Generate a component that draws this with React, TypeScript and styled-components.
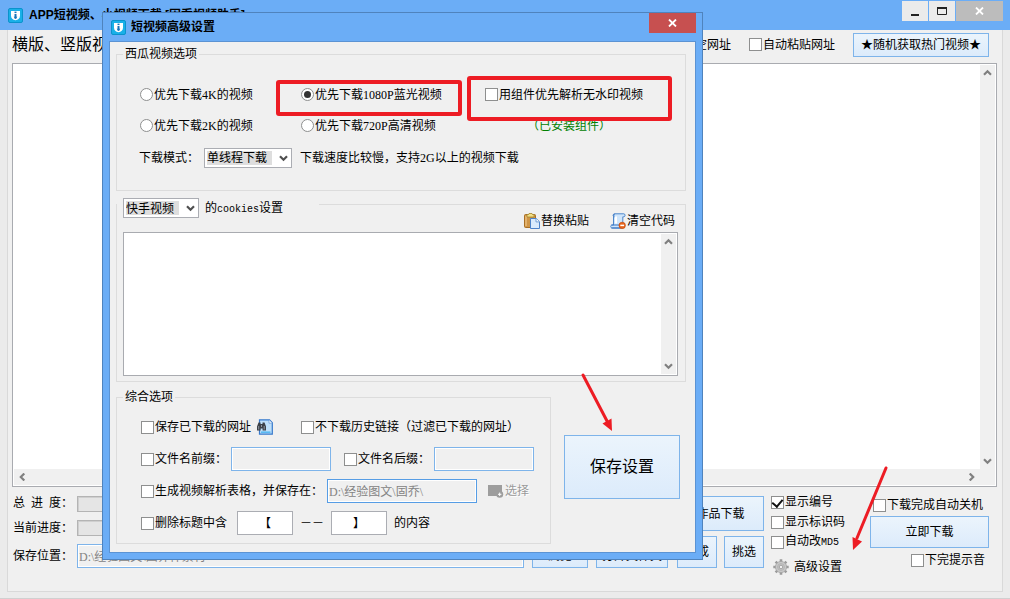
import React from 'react';
import styled, { createGlobalStyle, css } from 'styled-components';

const GlobalStyle = createGlobalStyle`
  * { box-sizing: border-box; }
  body {
    margin: 0;
    background: #ebebeb;
    color: #000;
    font: 12px/14px "Liberation Serif", "Noto Sans CJK SC", sans-serif;
  }
  button, input, select, textarea { font: inherit; color: inherit; margin: 0; }
`;

/* ---------- shared controls ---------- */

const Mono = styled.span`
  font-family: "Liberation Mono", monospace;
  font-size: 10px;
`;

const PushButton = styled.button<{ $w?: number; $h?: number; $size?: number }>`
  ${(p) => (p.$w ? `width: ${p.$w}px;` : '')}
  height: ${(p) => p.$h ?? 24}px;
  padding: 0;
  border: 1px solid #7eb4ea;
  background: linear-gradient(#ebf4fc, #dcebfb);
  font-size: ${(p) => p.$size ?? 12}px;
  white-space: nowrap;
`;

const IconButton = styled.button`
  display: flex;
  align-items: center;
  gap: 1px;
  padding: 0;
  border: 0;
  background: none;
  white-space: nowrap;
  &:disabled { color: #9a9a9a; text-shadow: 1px 1px #fff; }
`;

const Option = styled.label`
  display: inline-flex;
  align-items: center;
  gap: 1px;
  white-space: nowrap;
`;

const boxStyle = css`
  appearance: none;
  flex: none;
  width: 13px;
  height: 13px;
  border: 1px solid #8e8f8f;
  background: #fff;
`;

const Tick = styled.input.attrs({ type: 'checkbox' })`
  ${boxStyle}
  display: grid;
  place-items: center;
  &:checked::after {
    content: "";
    width: 5px;
    height: 8px;
    margin-bottom: 2px;
    border: solid #111;
    border-width: 0 2px 2px 0;
    transform: rotate(40deg);
  }
`;

const Dot = styled.input.attrs({ type: 'radio' })`
  ${boxStyle}
  border-radius: 50%;
  display: grid;
  place-items: center;
  &:checked::after {
    content: "";
    width: 7px;
    height: 7px;
    border-radius: 50%;
    background: #333;
  }
`;

const TextField = styled.input.attrs({ type: 'text' })<{
  $w?: number;
  $tone?: 'blue' | 'focus' | 'grey';
}>`
  ${(p) => (p.$w ? `width: ${p.$w}px;` : 'flex: 1; min-width: 0;')}
  height: 24px;
  padding: 0 1px;
  border: 1px solid ${(p) => (p.$tone === 'grey' ? '#abadb3' : p.$tone === 'focus' ? '#569de5' : '#7eb4ea')};
  background: ${(p) => (p.$tone === 'grey' ? '#fff' : '#f0f0f0')};
  box-shadow: inset 0 0 0 1px #fff;
  color: ${(p) => (p.$tone === 'grey' ? '#000' : '#838383')};
  text-align: ${(p) => (p.$tone === 'grey' ? 'center' : 'left')};
  border-radius: 0;
  outline: 0;
`;

const Field = styled.label<{ $w: number }>`
  display: inline-flex;
  align-items: center;
  flex: none;
  width: ${(p) => p.$w}px;
  gap: 1px;
  white-space: nowrap;
`;

const SelectWrap = styled.span<{ $w: number }>`
  position: relative;
  display: inline-block;
  flex: none;
  width: ${(p) => p.$w}px;
  height: 20px;
  svg { position: absolute; right: 4px; top: 6px; pointer-events: none; }
`;

const SelectBox = styled.select`
  appearance: none;
  display: block;
  width: 100%;
  height: 100%;
  padding: 0 2px;
  border: 1px solid #abadb3;
  border-radius: 0;
  background: linear-gradient(#dedede, #dedede) 2px 2px / calc(100% - 21px) 14px no-repeat #fff;
`;

const Chevron = ({ turn = 0, color = '#808080' }: { turn?: number; color?: string }) => (
  <svg width="9" height="8" viewBox="0 0 9 8">
    <path
      d="M1 2.2 4.5 5.7 8 2.2"
      fill="none"
      stroke={color}
      strokeWidth="2.2"
      transform={`rotate(${turn} 4.5 4)`}
    />
  </svg>
);

function DropDown({ width, label, value }: { width: number; label: string; value: string }) {
  return (
    <SelectWrap $w={width}>
      <SelectBox aria-label={label}>
        <option>{value}</option>
      </SelectBox>
      <Chevron color="#505050" />
    </SelectWrap>
  );
}

/* ---------- text panes with scroll bars ---------- */

const Pane = styled.div<{ $fixed?: number }>`
  display: grid;
  grid-template-columns: 1fr 15px;
  grid-template-rows: 1fr auto;
  ${(p) => (p.$fixed ? `height: ${p.$fixed}px;` : 'flex: 1;')}
  padding: 1px;
  border: 1px solid #a9abb0;
  background: #fff;
`;

const PaneText = styled.textarea`
  display: block;
  width: 100%;
  height: 100%;
  border: 0;
  padding: 2px;
  resize: none;
  outline: 0;
  overflow: hidden;
`;

const Track = styled.div<{ $flat?: boolean }>`
  display: flex;
  flex-direction: ${(p) => (p.$flat ? 'row' : 'column')};
  justify-content: space-between;
  align-items: center;
  padding: ${(p) => (p.$flat ? '0 4px' : '4px 0')};
  ${(p) => p.$flat && 'height: 16px;'}
  background: #f0f0f0;
`;

const TrackCorner = styled.div`
  background: #f0f0f0;
`;

/* ---------- main window ---------- */

const Window = styled.div`
  position: relative;
  display: flex;
  flex-direction: column;
  min-height: 100vh;
  background: #ebebeb;
  border-bottom: 1px solid #d0d0d0;
`;

const TitleBar = styled.header`
  display: flex;
  align-items: center;
  gap: 6px;
  height: 30px;
  padding: 0 7px 0 8px;
  background: #6badf6;
`;

const Title = styled.h1`
  flex: 1;
  margin: 0;
  font: bold 12px/18px "Liberation Sans", "Noto Sans CJK SC", sans-serif;
  white-space: nowrap;
`;

const WindowButtons = styled.div`
  display: flex;
  align-self: flex-start;
  gap: 1px;
  padding-top: 1px;
`;

const WindowButton = styled.button<{ $kind?: 'idle' | 'danger' }>`
  display: grid;
  place-items: center;
  width: ${(p) => (p.$kind ? 47 : 26)}px;
  height: 20px;
  padding: 0;
  border: 0;
  background: ${(p) => (p.$kind === 'danger' ? '#c75050' : p.$kind === 'idle' ? '#bcbcbc' : '#ebebeb')};
`;

const Panel = styled.main`
  display: flex;
  flex: 1;
  flex-direction: column;
  margin: 0 7px 6px;
  padding: 0 5px 0 4px;
  border: solid #d9d9d9;
  border-width: 0 1px 1px;
  background: #f0f0f0;
`;

const TopRow = styled.div`
  display: flex;
  align-items: center;
  height: 33px;
  padding: 0 8px 4px 0;
`;

const Heading = styled.h2`
  flex: 1;
  margin: 0;
  font-size: 16px;
  line-height: 20px;
  font-weight: normal;
`;

const TopActions = styled.div`
  display: flex;
  align-items: center;
  gap: 18px;
`;

const Footer = styled.div`
  display: flex;
  gap: 8px;
  height: 104px;
  padding: 9px 8px 0 1px;
`;

const SaveForm = styled.div`
  display: grid;
  flex: 1;
  grid-template-columns: 64px 1fr;
  grid-template-rows: 16px 16px 24px;
  gap: 8px 0;
  align-items: center;
  padding-right: 1px;
  white-space: nowrap;
`;

const ProgressBar = styled.div`
  height: 16px;
  border: 1px solid #b4b4b4;
  background: #e5e5e5;
  box-shadow: inset 1px 1px #cfcfcf;
`;

const Inline = styled.div<{ $gap?: number }>`
  display: flex;
  align-items: center;
  gap: ${(p) => p.$gap ?? 8}px;
`;

const Stack = styled.div<{ $w: number; $gap: number }>`
  display: flex;
  flex: none;
  flex-direction: column;
  width: ${(p) => p.$w}px;
  gap: ${(p) => p.$gap}px;
`;

const CheckList = styled(Stack)`
  margin: -4px 0 0 -1px;
  ${Option} { height: 20px; }
  ${IconButton} { height: 20px; gap: 5px; margin: 5px 0 0 2px; }
`;

const StartColumn = styled(Stack)`
  margin-left: 1px;
  ${Option} { height: 18px; }
  ${Option}:first-child { padding-left: 3px; }
  ${Option}:last-child { align-self: flex-end; height: 20px; padding-right: 4px; }
`;

/* ---------- settings dialog ---------- */

const Dialog = styled.section`
  position: absolute;
  left: 102px;
  top: 12px;
  width: 601px;
  padding: 0 6px 6px;
  border: 1px solid #4f83bd;
  background: #6badf6;
`;

const DialogTitle = styled.header`
  display: flex;
  align-items: center;
  gap: 5px;
  height: 28px;
  padding-left: 2px;
  ${WindowButton} { align-self: flex-start; }
`;

const DialogBody = styled.form`
  display: flex;
  flex-direction: column;
  gap: 7px;
  padding: 5px 9px 8px 6px;
  border: 1px solid #5b93d3;
  background: #f0f0f0;
`;

const Group = styled.fieldset`
  flex: 1;
  min-width: 0;
  margin: 0;
  padding: 0;
  border: 1px solid #dcdcdc;
`;

const GroupTitle = styled.legend`
  margin-left: 6px;
  padding: 0 2px;
  line-height: 14px;
`;

const CookieTitle = styled.legend`
  display: flex;
  align-items: flex-start;
  gap: 6px;
  width: 202px;
  height: 12px;
  padding: 0 0 0 6px;
  line-height: 20px;
`;

const QualityGrid = styled.div`
  display: grid;
  grid-template-columns: 161px 184px 1fr;
  grid-template-rows: 31px 31px 34px;
  align-items: center;
  padding: 18px 0 15px 23px;
`;

const Installed = styled.span`
  padding-left: 42px;
  color: #008000;
`;

const ModeRow = styled.div`
  display: flex;
  grid-column: 1 / -1;
  align-items: center;
  gap: 8px;
  margin-left: -1px;
`;

const ModeLabel = styled.span`
  width: 57px;
  white-space: nowrap;
`;

const CookieBody = styled.div`
  padding: 0 7px 5px 6px;
`;

const CookieTools = styled.div`
  display: flex;
  justify-content: flex-end;
  gap: 21px;
  height: 22px;
  padding-right: 3px;
`;

const LowerArea = styled.div`
  display: flex;
  gap: 13px;
  margin-top: 1px;
  padding-right: 6px;
`;

const SaveSlot = styled.div`
  padding-top: 45px;
`;

const GeneralRows = styled.div`
  padding: 7px 0 4px 24px;
  ${Inline} { height: 32px; }
`;

const Between = styled.span`
  width: 24px;
  white-space: nowrap;
`;

const Annotations = styled.svg`
  position: absolute;
  left: 0;
  top: 0;
  pointer-events: none;
`;

/* ---------- drawings ---------- */

const AppIcon = () => (
  <svg width="15" height="15" viewBox="0 0 15 15">
    <rect x=".5" y=".5" width="14" height="14" rx="1.5" fill="#19b0e8" stroke="#0a93cc" />
    <path d="M3 3h9v4.6c0 2.800-1.800 4.600-4.500 4.600S3 10.400 3 7.600z" fill="#fff" />
    <path d="M7.500 3.600v1.500" stroke="#1673b9" strokeWidth="2" />
    <path d="M7.500 6v4.600" stroke="#1673b9" strokeWidth="2" />
    <path d="M5.700 8.800h3.600L7.500 11z" fill="#1673b9" />
  </svg>
);

const CloseMark = () => (
  <svg width="9" height="8" viewBox="0 0 9 8">
    <path d="m1 .5 7 7M8 .5l-7 7" stroke="#fff" strokeWidth="1.8" />
  </svg>
);

const PasteIcon = () => (
  <svg width="16" height="16" viewBox="0 0 16 16">
    <rect x=".5" y="1.5" width="11" height="13" rx="1" fill="#cf9546" stroke="#a96f24" />
    <path d="M2 3v10" stroke="#e8bd7c" strokeWidth="1.5" />
    <path d="M3 3V1.500h1.500L5 .5h3l.5 1H10V4H3z" fill="#f3df86" stroke="#a4852e" strokeWidth=".8" />
    <path d="M6.500 5.500h5.700l3.300 3.200v6.800h-9z" fill="#d9eafc" stroke="#4c82c9" />
    <path d="M12 5.500v3.400h3.500" fill="#fff" stroke="#6c9bd5" />
  </svg>
);

const ClearIcon = () => (
  <svg width="16" height="16" viewBox="0 0 16 16">
    <path d="M4.500.8h9.300c1.700 0 1.700 3 0 3h-1V15H2.200c-2 0-2-3 0-3h1.300V3.500z" fill="#cfe5fb" stroke="#4d86ca" />
    <path d="M4.500.8C2.600 1 2.800 3.700 4.500 3.800M1.500 12h9M1.500 15h9" fill="none" stroke="#3574c4" />
    <path d="M6 3.500v7" stroke="#fff" strokeWidth="2" />
    <circle cx="12.200" cy="12.400" r="3.200" fill="#e8641c" stroke="#c54a0c" strokeWidth=".7" />
    <path d="M10.300 12.400h3.800" stroke="#fff" strokeWidth="1.500" />
  </svg>
);

const FindIcon = () => (
  <svg width="16" height="16" viewBox="0 0 16 16">
    <path d="M2.500.8h10l2.800 2.900v11.500H2.500z" fill="#bfe0fa" stroke="#3779cb" strokeWidth="1.200" />
    <path d="M12 1v3.200h3.200" fill="#fff" stroke="#6da0dc" strokeWidth=".8" />
    <path d="M4 13.200h9.500" stroke="#59baf2" strokeWidth="1.600" />
    <path d="M1.500 3.500h2V5h2V3.500h2L9 7.500V11.500H5.600V9.500H3.600v2H0v-4z" fill="#3c4148" />
    <path d="M1.700 7v3.500M7.200 7v3.500M4.500 6v2" stroke="#98a1ac" strokeWidth=".9" />
  </svg>
);

const FolderIcon = () => (
  <svg width="16" height="14" viewBox="0 0 16 14">
    <path d="M0 1h14v8h-3v3H0z" fill="#9d9d9d" />
    <circle cx="11.700" cy="10.300" r="3.500" fill="#9d9d9d" />
    <path d="M11.700 8.600v3.400M10 10.300h3.400" stroke="#fff" />
  </svg>
);

const GearIcon = () => (
  <svg width="16" height="16" viewBox="0 0 16 16">
    <g stroke="#9b9b9b" strokeWidth="2.600">
      <path d="M8 .3v15.400M.3 8h15.400M2.600 2.600l10.800 10.800M13.400 2.600 2.600 13.400" />
    </g>
    <circle cx="8" cy="8" r="5.600" fill="#c8c8c8" stroke="#a4a4a4" strokeWidth=".8" />
    <circle cx="8" cy="8" r="3.400" fill="none" stroke="#b0b0b0" strokeWidth=".9" />
    <circle cx="8" cy="8" r="1.800" fill="#f0f0f0" stroke="#949494" strokeWidth=".8" />
  </svg>
);

/* ---------- page ---------- */

function SettingsDialog() {
  return (
    <Dialog role="dialog" aria-label="短视频高级设置">
      <DialogTitle>
        <AppIcon />
        <Title as="h2">短视频高级设置</Title>
        <WindowButton $kind="danger" aria-label="关闭设置"><CloseMark /></WindowButton>
      </DialogTitle>
      <DialogBody>
        <Group>
          <GroupTitle>西瓜视频选项</GroupTitle>
          <QualityGrid>
            <Option><Dot name="quality" />优先下载4K的视频</Option>
            <Option><Dot name="quality" defaultChecked />优先下载1080P蓝光视频</Option>
            <Option><Tick />用组件优先解析无水印视频</Option>
            <Option><Dot name="quality" />优先下载2K的视频</Option>
            <Option><Dot name="quality" />优先下载720P高清视频</Option>
            <Installed>（已安装组件）</Installed>
            <ModeRow>
              <ModeLabel>下载模式：</ModeLabel>
              <DropDown width={88} label="下载模式" value="单线程下载" />
              <span>下载速度比较慢，支持2G以上的视频下载</span>
            </ModeRow>
          </QualityGrid>
        </Group>

        <Group>
          <CookieTitle>
            <DropDown width={76} label="平台" value="快手视频" />
            <span>的<Mono>cookies</Mono>设置</span>
          </CookieTitle>
          <CookieBody>
            <CookieTools>
              <IconButton type="button"><PasteIcon />替换粘贴</IconButton>
              <IconButton type="button"><ClearIcon />清空代码</IconButton>
            </CookieTools>
            <Pane $fixed={144}>
              <PaneText aria-label="cookies" />
              <Track><Chevron turn={180} /><Chevron /></Track>
            </Pane>
          </CookieBody>
        </Group>

        <LowerArea>
          <Group>
            <GroupTitle>综合选项</GroupTitle>
            <GeneralRows>
              <Inline $gap={5}>
                <Field $w={111}><Tick />保存已下载的网址</Field>
                <Field as="span" $w={39}><FindIcon /></Field>
                <Option><Tick />不下载历史链接（过滤已下载的网址）</Option>
              </Inline>
              <Inline $gap={0}>
                <Field $w={90}><Tick />文件名前缀：</Field>
                <TextField $w={100} aria-label="文件名前缀" />
                <Field as="span" $w={13} />
                <Field $w={90}><Tick />文件名后缀：</Field>
                <TextField $w={100} aria-label="文件名后缀" />
              </Inline>
              <Inline $gap={0}>
                <Field $w={186}><Tick />生成视频解析表格，并保存在：</Field>
                <TextField $w={150} $tone="focus" aria-label="表格保存位置" defaultValue="D:\经验图文\固乔\" />
                <Field as="span" $w={11} />
                <IconButton type="button" disabled><FolderIcon />选择</IconButton>
              </Inline>
              <Inline $gap={7}>
                <Field $w={89}><Tick />删除标题中含</Field>
                <TextField $w={56} $tone="grey" aria-label="起始符号" defaultValue="【" />
                <Between>－－</Between>
                <TextField $w={56} $tone="grey" aria-label="结束符号" defaultValue="】" />
                <span>的内容</span>
              </Inline>
            </GeneralRows>
          </Group>
          <SaveSlot>
            <PushButton type="button" $w={116} $h={64} $size={16}>保存设置</PushButton>
          </SaveSlot>
        </LowerArea>
      </DialogBody>
    </Dialog>
  );
}

export default function App() {
  return (
    <Window>
      <GlobalStyle />
      <TitleBar>
        <AppIcon />
        <Title>APP短视频、小视频下载 [固乔视频助手]</Title>
        <WindowButtons>
          <WindowButton aria-label="最小化">
            <svg width="8" height="12"><path d="M0 10h8" stroke="#222" strokeWidth="2" /></svg>
          </WindowButton>
          <WindowButton aria-label="最大化">
            <svg width="10" height="8">
              <path d="M.5 0v7.500h9V0" fill="none" stroke="#222" />
              <path d="M0 1h10" stroke="#222" strokeWidth="2" />
            </svg>
          </WindowButton>
          <WindowButton $kind="idle" aria-label="关闭"><CloseMark /></WindowButton>
        </WindowButtons>
      </TitleBar>

      <Panel>
        <TopRow>
          <Heading>横版、竖版视频</Heading>
          <TopActions>
            <IconButton>清空网址</IconButton>
            <Option><Tick />自动粘贴网址</Option>
            <PushButton $w={136}>★随机获取热门视频★</PushButton>
          </TopActions>
        </TopRow>

        <Pane>
          <PaneText aria-label="网址列表" />
          <Track><Chevron turn={180} /><Chevron /></Track>
          <Track $flat><Chevron turn={90} /><Chevron turn={-90} /></Track>
          <TrackCorner />
        </Pane>

        <Footer>
          <SaveForm>
            <span>总<Mono>&nbsp;</Mono>进<Mono>&nbsp;</Mono>度：</span>
            <ProgressBar role="progressbar" aria-label="总进度" />
            <span>当前进度：</span>
            <ProgressBar role="progressbar" aria-label="当前进度" />
            <label htmlFor="save-path">保存位置：</label>
            <Inline>
              <TextField id="save-path" defaultValue="D:\经验图文\固乔件素材" />
              <PushButton $w={56}>浏览</PushButton>
              <PushButton $w={72}>打开文件夹</PushButton>
            </Inline>
          </SaveForm>
          <Stack $w={87} $gap={5}>
            <PushButton $h={35}>作品下载</PushButton>
            <Inline $gap={7}>
              <PushButton $w={40} $h={32}>生成</PushButton>
              <PushButton $w={40} $h={32}>挑选</PushButton>
            </Inline>
          </Stack>
          <CheckList $w={90} $gap={0}>
            <Option><Tick defaultChecked />显示编号</Option>
            <Option><Tick />显示标识码</Option>
            <Option><Tick /><span>自动改<Mono>MD5</Mono></span></Option>
            <IconButton><GearIcon />高级设置</IconButton>
          </CheckList>
          <StartColumn $w={119} $gap={2}>
            <Option><Tick />下载完成自动关机</Option>
            <PushButton $h={32}>立即下载</PushButton>
            <Option><Tick />下完提示音</Option>
          </StartColumn>
        </Footer>
      </Panel>

      <SettingsDialog />

      <Annotations width="900" height="560" viewBox="0 0 900 560" fill="none" stroke="#ed1c24">
        <rect x="278" y="82" width="182" height="32" rx="1" strokeWidth="4" />
        <rect x="469" y="78" width="201" height="41" rx="1" strokeWidth="4" />
        <g strokeWidth="3" strokeLinecap="round">
          <path d="M583 375 607 421" />
          <path d="M886 468 857 538" />
        </g>
        <g fill="#ed1c24" stroke="none">
          <path d="M612 431 602.500 423.500 611.500 418.500z" />
          <path d="M853 550 852.500 537 862 541.500z" />
        </g>
      </Annotations>
    </Window>
  );
}
